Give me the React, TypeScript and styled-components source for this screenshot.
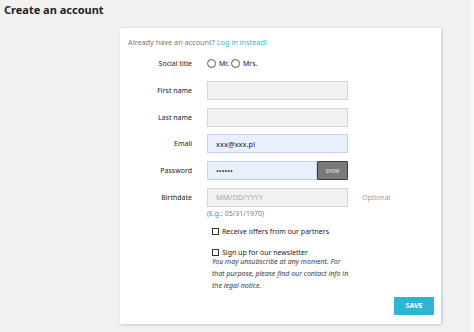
import React from 'react'
import styled, { createGlobalStyle } from 'styled-components'

const GlobalStyle = createGlobalStyle`
  html, body {
    margin: 0;
    padding: 0;
    background: #f1f1f1;
    font-family: "Noto Sans", "Open Sans", sans-serif;
    color: #232323;
  }
`

const Page = styled.div`
  width: 474px;
  height: 332px;
  overflow: hidden;
  background: linear-gradient(to right, #f1f1f1 471px, #fafafa 471px);
`

const Title = styled.h1`
  margin: 0;
  padding: 3px 0 0 4px;
  height: 25px;
  font-size: 11px;
  font-weight: 700;
  line-height: 14px;
  color: #232323;
`

const Card = styled.section`
  margin-left: 120px;
  width: 306px;
  padding: 9px 7px 9px 8px;
  background: #fff;
  box-shadow: 1px 1px 3px rgba(0, 0, 0, 0.2);
`

const Intro = styled.p`
  margin: 0 0 7px;
  font-size: 7.3px;
  line-height: 10px;
  color: #7a7a7a;
`

const Link = styled.a`
  color: #2fb5d2;
  text-decoration: none;
`

const Form = styled.div`
  display: grid;
  grid-template-columns: 64px 141px auto;
  column-gap: 15px;
  row-gap: 7.75px;
  align-items: center;
`

const Label = styled.label`
  font-size: 7px;
  text-align: right;
  color: #232323;
`

const Field = styled.div<{ $span?: boolean }>`
  display: flex;
  align-items: center;
  min-height: 19px;
  grid-column: ${p => (p.$span ? '2 / 4' : 'auto')};
`

const Input = styled.div<{ $filled?: boolean }>`
  box-sizing: border-box;
  flex: 1;
  height: 19px;
  padding: 0 8px;
  display: flex;
  align-items: center;
  font-size: 7.5px;
  color: ${p => (p.$filled ? '#232323' : '#a9a9a9')};
  background: ${p => (p.$filled ? '#e8f0fe' : '#f1f1f1')};
  border: 1px solid ${p => (p.$filled ? '#c6d2ea' : '#d6d6d6')};
`

const ShowButton = styled.button`
  box-sizing: border-box;
  width: 31px;
  height: 19px;
  padding: 0;
  background: #7a7a7a;
  border: 1px solid #3a3a3a;
  border-radius: 1px;
  color: #d8d8d8;
  font-family: inherit;
  font-size: 4.5px;
  font-weight: 600;
`

const Note = styled.span`
  font-size: 7px;
  color: #9a9a9a;
  margin-left: -1px;
`

const Radios = styled.div`
  display: flex;
  align-items: center;
  gap: 2px;
  font-size: 7px;
`

const Radio = styled.span`
  box-sizing: border-box;
  width: 9px;
  height: 9px;
  border: 1px solid #555;
  border-radius: 50%;
  margin-right: 1px;
`

const Stack = styled.div`
  grid-column: 2 / 4;
  display: flex;
  flex-direction: column;
`

const Hint = styled.div`
  margin-top: 2px;
  font-size: 7px;
  line-height: 10px;
  color: #7a7a7a;
`

const Check = styled.div<{ $top: number }>`
  display: flex;
  align-items: center;
  gap: 3px;
  margin: ${p => p.$top}px 0 0 5px;
  font-size: 7px;
  line-height: 7px;
  color: #232323;
`

const Box = styled.span`
  box-sizing: border-box;
  width: 7px;
  height: 7px;
  border: 1px solid #333;
`

const Legal = styled.div`
  margin: 0 0 0 5px;
  width: 140px;
  font-size: 7px;
  font-style: italic;
  line-height: 12px;
  color: #3a3a3a;
`

const Footer = styled.div`
  display: flex;
  justify-content: flex-end;
  margin-top: 5px;
`

const SaveButton = styled.button`
  width: 40px;
  height: 18px;
  padding: 0;
  border: none;
  background: #2fb5d2;
  color: #fff;
  font-family: inherit;
  font-size: 7px;
  font-weight: 700;
`

export default function App() {
  return (
    <Page>
      <GlobalStyle />
      <Title>Create an account</Title>
      <Card>
        <Intro>
          Already have an account? <Link>Log in instead!</Link>
        </Intro>
        <Form>
          <Label>Social title</Label>
          <Field $span>
            <Radios>
              <Radio />
              Mr.
              <Radio />
              Mrs.
            </Radios>
          </Field>
          <Label>First name</Label>
          <Field>
            <Input />
          </Field>
          <span />
          <Label>Last name</Label>
          <Field>
            <Input />
          </Field>
          <span />
          <Label>Email</Label>
          <Field>
            <Input $filled>xxx@xxx.pl</Input>
          </Field>
          <span />
          <Label>Password</Label>
          <Field>
            <Input $filled>••••••</Input>
            <ShowButton>SHOW</ShowButton>
          </Field>
          <span />
          <Label>Birthdate</Label>
          <Field>
            <Input>MM/DD/YYYY</Input>
          </Field>
          <Note>Optional</Note>
        </Form>
        <Form>
          <span />
          <Stack>
            <Hint>(E.g.: 05/31/1970)</Hint>
            <Check $top={9}>
              <Box />
              Receive offers from our partners
            </Check>
            <Check $top={14}>
              <Box />
              Sign up for our newsletter
            </Check>
            <Legal>
              You may unsubscribe at any moment. For that purpose, please find
              our contact info in the legal notice.
            </Legal>
          </Stack>
        </Form>
        <Footer>
          <SaveButton>SAVE</SaveButton>
        </Footer>
      </Card>
    </Page>
  )
}
